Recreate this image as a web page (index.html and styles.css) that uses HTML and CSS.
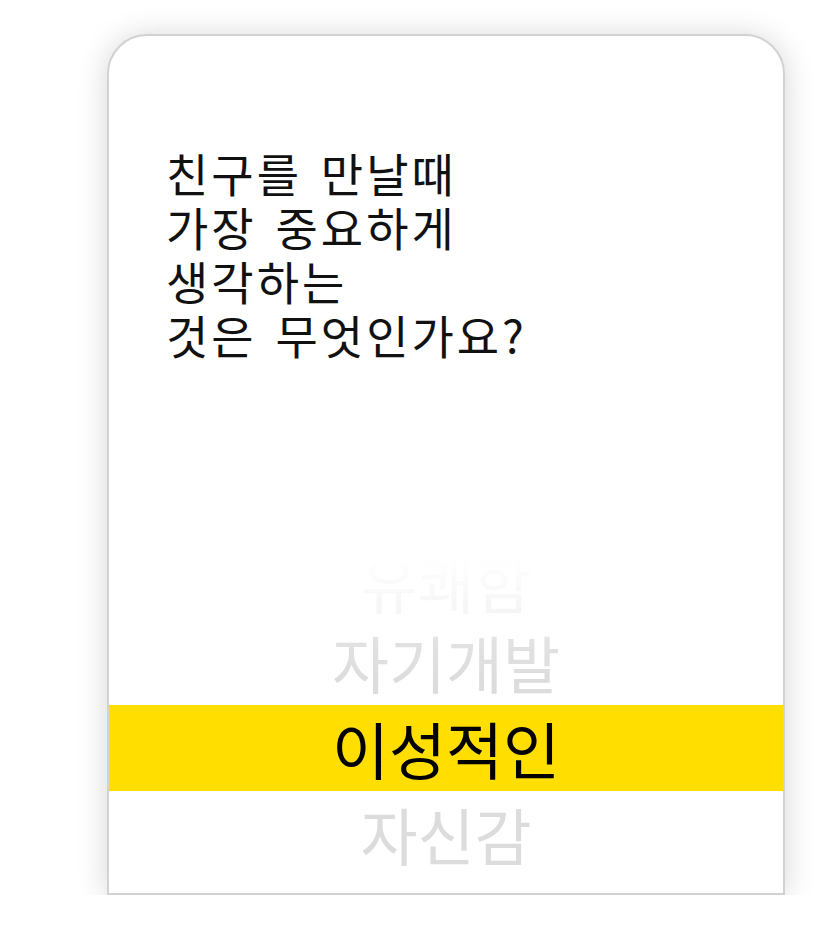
FILE: index.html
```html
<!DOCTYPE html>
<html lang="ko">
	<head>
		<meta charset="utf-8">
		<title>질문</title>
		<link rel="stylesheet" href="styles.css">
	</head>
	<body>

		<div id="page">
			<div class="card">

				<div class="question">
					<div>친구를 만날때</div>
					<div>가장 중요하게</div>
					<div>생각하는</div>
					<div>것은 무엇인가요?</div>
				</div>

				<div class="picker">
					<div class="item first">유쾌함</div>
					<div class="item">자기개발</div>
					<div class="item selected">이성적인</div>
					<div class="item">자신감</div>
				</div>

			</div>
		</div>

	</body>
</html>
```

FILE: styles.css
```css
body{
	margin: 0;
	padding: 0;
	background: #fff;
	font-family: "Noto Sans CJK KR", "Noto Sans", sans-serif;
	overflow: hidden;
}

#page{
	padding: 34px 0 0 107px;
}

.card{
	width: 674px;
	height: 857px;
	background: #fff;
	border: 2px solid #d2d2d2;
	border-radius: 40px 40px 0 0;
	box-shadow: 0 2px 30px rgba(0,0,0,0.17);
	display: flex;
	flex-direction: column;
	overflow: hidden;
}

.question{
	padding: 109px 0 0 57px;
	font-size: 46px;
	line-height: 54px;
	letter-spacing: 3px;
	word-spacing: 3px;
	color: #111;
}

.question div{
	height: 54px;
}

.picker{
	margin-top: auto;
	height: 360px;
	display: flex;
	flex-direction: column;
	justify-content: flex-end;
	overflow: hidden;
	-webkit-mask-image: linear-gradient(to bottom, rgba(0,0,0,0) 0, rgba(0,0,0,0) 25px, rgba(0,0,0,0.3) 80px, rgba(0,0,0,0.85) 110px, #000 150px);
	mask-image: linear-gradient(to bottom, rgba(0,0,0,0) 0, rgba(0,0,0,0) 25px, rgba(0,0,0,0.3) 80px, rgba(0,0,0,0.85) 110px, #000 150px);
}

.item{
	flex: none;
	height: 86px;
	line-height: 86px;
	text-align: center;
	font-size: 62px;
	color: #dcdcdc;
}

.first{
	margin-bottom: -6px;
}

.item:last-child{
	margin-bottom: 16px;
}

.selected{
	background: #ffde00;
	color: #000;
}
```
